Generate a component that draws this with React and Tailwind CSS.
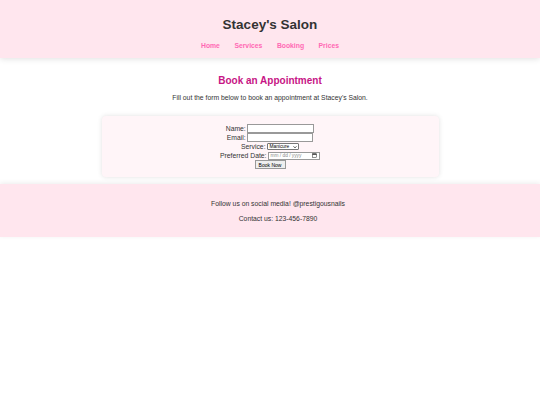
const navLinks = ["Home", "Services", "Booking", "Prices"];

const App = () => {
  return (
    <div className="min-h-[405px] bg-white font-['Liberation_Sans',Arial,sans-serif] text-[#333]">
      {/* header */}
      <header className="bg-[#ffe6ee] pt-[17px] pb-[8px] text-center shadow-[0_1px_6px_rgba(0,0,0,0.12)] relative">
        <h1 className="text-[13.5px] leading-[16px] font-bold text-[#333]">
          Stacey's Salon
        </h1>
        <nav className="mt-[9px] flex justify-center gap-[14.5px]">
          {navLinks.map((link) => (
            <a
              key={link}
              href="#"
              className="text-[6.8px] leading-[8px] font-bold text-[#ff69b4]"
            >
              {link}
            </a>
          ))}
        </nav>
      </header>

      {/* booking */}
      <main className="pt-[17px] pb-[7px] text-center">
        <h2 className="text-[10px] leading-[12px] font-bold text-[#c71585]">
          Book an Appointment
        </h2>
        <p className="mt-[7px] text-[6.8px] leading-[8px]">
          Fill out the form below to book an appointment at Stacey's Salon.
        </p>

        <div className="mx-auto mt-[14px] w-[337px] rounded-[4px] bg-[#fff5f8] pt-[8px] pb-[8px] shadow-[0_0_5px_rgba(0,0,0,0.12)]">
          <form className="flex flex-col items-center text-[6.8px] leading-[9px]">
            <div className="flex h-[9px] items-center">
              <label>Name:</label>
              <input
                type="text"
                className="ml-[1.5px] h-[8.5px] w-[67px] border border-[#999] bg-white"
              />
            </div>
            <div className="flex h-[9px] items-center">
              <label>Email:</label>
              <input
                type="text"
                className="ml-[1.5px] h-[8.5px] w-[66px] border border-[#999] bg-white"
              />
            </div>
            <div className="flex h-[9px] items-center">
              <label>Service:</label>
              <div className="ml-[1.5px] flex h-[7.5px] w-[32px] items-center justify-between rounded-[1px] border border-[#777] bg-white px-[1.5px] text-[4.8px] leading-[6px] text-black">
                <span>Manicure</span>
                <svg width="4" height="4" viewBox="0 0 10 10">
                  <path d="M1.5 3.5 L5 7 L8.5 3.5" fill="none" stroke="#111" strokeWidth="2" />
                </svg>
              </div>
            </div>
            <div className="flex h-[9px] items-center">
              <label>Preferred Date:</label>
              <div className="ml-[1.5px] flex h-[8px] w-[52px] items-center justify-between border border-[#999] bg-white px-[1.5px] text-[4.8px] text-[#888]">
                <span>mm / dd / yyyy</span>
                <svg width="5" height="5" viewBox="0 0 10 10">
                  <rect x="1" y="1.5" width="8" height="7.5" fill="none" stroke="#222" strokeWidth="1" />
                  <rect x="1" y="1.5" width="8" height="2" fill="#222" />
                </svg>
              </div>
            </div>
            <div className="flex h-[9px] items-center">
              <button
                type="button"
                className="h-[8.5px] w-[31px] border border-[#999] bg-[#efefef] text-[5px] leading-[6px] text-black"
              >
                Book Now
              </button>
            </div>
          </form>
        </div>
      </main>

      {/* footer */}
      <footer className="bg-[#ffe6ee] pt-[16px] pb-[14px] pl-[16px] text-center text-[6.8px] leading-[8px] shadow-[0_-1px_5px_rgba(0,0,0,0.08)]">
        <p>Follow us on social media! @prestigousnails</p>
        <p className="mt-[7px]">Contact us: 123-456-7890</p>
      </footer>
    </div>
  );
};

export default App;
